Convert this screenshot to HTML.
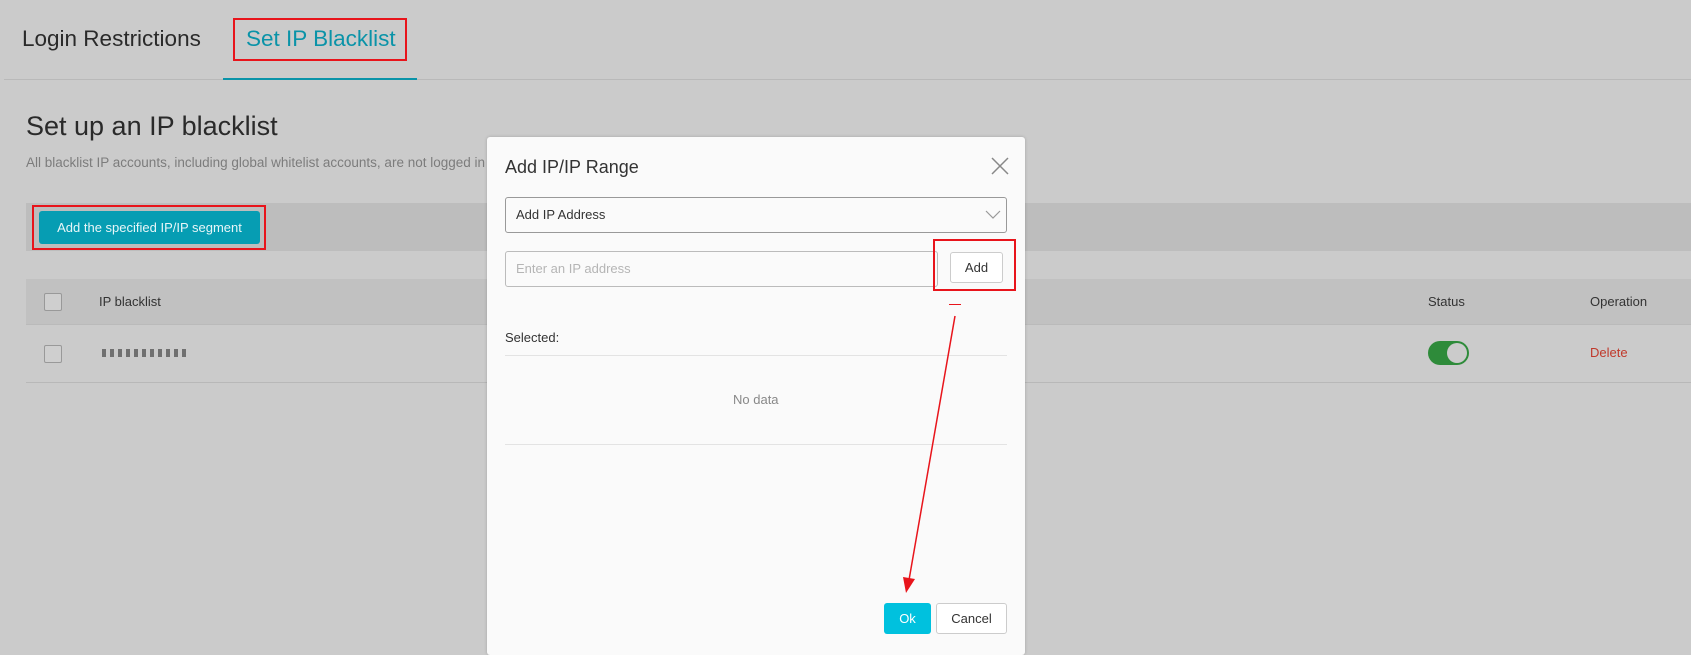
<!DOCTYPE html>
<html><head><meta charset="utf-8"><style>
*{margin:0;padding:0;box-sizing:border-box}
body{width:1691px;height:655px;overflow:hidden;background:#cbcbcb;font-family:"Liberation Sans",Arial,sans-serif;position:relative;color:#333}
.a{position:absolute}
.cb{position:absolute;width:18px;height:18px;border:1px solid #999;border-radius:2px;background:#cfcfcf}
</style></head><body>
<div class="a" style="left:22px;top:26px;font-size:22.5px;color:#2a2a2a">Login Restrictions</div>
<div class="a" style="left:246px;top:26px;font-size:22.5px;color:#0a93a8">Set IP Blacklist</div>
<div class="a" style="left:233px;top:18px;width:174px;height:43px;border:2px solid #e8141b"></div>
<div class="a" style="left:4px;top:79px;width:1687px;height:1px;background:#b9b9b9"></div>
<div class="a" style="left:223px;top:78px;width:194px;height:2px;background:#0a93a8"></div>
<div class="a" style="left:26px;top:111px;font-size:27px;color:#2a2a2a">Set up an IP blacklist</div>
<div class="a" style="left:26px;top:155px;font-size:13.5px;color:#7c7c7c">All blacklist IP accounts, including global whitelist accounts, are not logged in</div>
<div class="a" style="left:26px;top:203px;width:1665px;height:48px;background:#bdbdbd"></div>
<div class="a" style="left:39px;top:211px;width:221px;height:33px;background:#069db3;border-radius:3px;color:#e8f6f8;font-size:13px;line-height:33px;text-align:center">Add the specified IP/IP segment</div>
<div class="a" style="left:32px;top:205px;width:234px;height:45px;border:2px solid #e8141b"></div>
<div class="a" style="left:26px;top:279px;width:1665px;height:46px;background:#c1c1c1;border-bottom:1px solid #bababa"></div>
<div class="cb" style="left:44px;top:293px"></div>
<div class="a" style="left:99px;top:294px;font-size:13px;color:#333">IP blacklist</div>
<div class="a" style="left:1428px;top:294px;font-size:13px;color:#333">Status</div>
<div class="a" style="left:1590px;top:294px;font-size:13px;color:#333">Operation</div>
<div class="cb" style="left:44px;top:345px"></div>
<div class="a" style="left:102px;top:349px;width:84px;height:8px;background:repeating-linear-gradient(90deg,#333 0 4px,transparent 4px 8px);opacity:.6"></div>
<div class="a" style="left:26px;top:382px;width:1665px;height:1px;background:#b8b8b8"></div>
<div class="a" style="left:1428px;top:341px;width:41px;height:24px;border-radius:12px;background:#2e8b3a"><div class="a" style="right:2px;top:2px;width:20px;height:20px;border-radius:50%;background:#cbcbcb"></div></div>
<div class="a" style="left:1590px;top:345px;font-size:13px;color:#c0392b">Delete</div>

<div class="a" style="left:487px;top:137px;width:538px;height:518px;background:#fafafa;border-radius:3px;box-shadow:0 0 3px rgba(0,0,0,.2)"></div>
<div class="a" style="left:505px;top:157px;font-size:18px;color:#333">Add IP/IP Range</div>
<svg class="a" style="left:991px;top:157px" width="18" height="18"><path d="M1 1L17 17M17 1L1 17" stroke="#888" stroke-width="1.5"/></svg>
<div class="a" style="left:505px;top:197px;width:502px;height:36px;border:1px solid #999;border-radius:3px;font-size:13px;line-height:34px;padding-left:10px;color:#333">Add IP Address</div>
<svg class="a" style="left:985px;top:210px" width="16" height="10"><path d="M1 1L8 8L15 1" stroke="#999" fill="none" stroke-width="1.2"/></svg>
<div class="a" style="left:505px;top:251px;width:433px;height:36px;border:1px solid #bbb;border-radius:3px;font-size:13px;line-height:34px;padding-left:10px;color:#b5b5b5">Enter an IP address</div>
<div class="a" style="left:950px;top:252px;width:53px;height:31px;border:1px solid #ccc;border-radius:3px;font-size:13px;line-height:29px;text-align:center;color:#333;background:#fff">Add</div>
<div class="a" style="left:933px;top:239px;width:83px;height:52px;border:2px solid #e8141b"></div>
<div class="a" style="left:949px;top:304px;width:12px;height:1px;background:#e8141b"></div>
<div class="a" style="left:505px;top:330px;font-size:13px;color:#333">Selected:</div>
<div class="a" style="left:505px;top:355px;width:502px;height:1px;background:#e3e3e3"></div>
<div class="a" style="left:733px;top:392px;font-size:13px;color:#888">No data</div>
<div class="a" style="left:505px;top:444px;width:502px;height:1px;background:#e3e3e3"></div>
<div class="a" style="left:884px;top:603px;width:47px;height:31px;background:#00c1de;border-radius:3px;color:#fff;font-size:13px;line-height:31px;text-align:center">Ok</div>
<div class="a" style="left:936px;top:603px;width:71px;height:31px;border:1px solid #ccc;border-radius:3px;background:#fff;font-size:13px;line-height:29px;text-align:center;color:#333">Cancel</div>
<svg class="a" style="left:0;top:0" width="1691" height="655"><path d="M955 316L909 580" stroke="#e8141b" stroke-width="1.5"/><path d="M903 577L915 579L906 593Z" fill="#e8141b"/></svg>
</body></html>
